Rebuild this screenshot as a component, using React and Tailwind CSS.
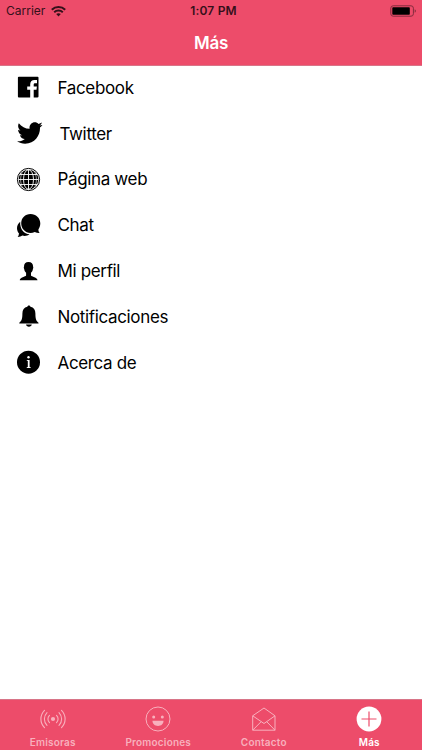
import React, { useState } from 'react';

const FacebookIcon = () => (
  <svg className="w-[25px] h-[25px]" viewBox="-0.5 -0.5 25 25">
    <path
      fill="currentColor"
      d="M2.300 1.200h18.800c.5 0 .9.4.9.9v19c0 .5-.4.9-.9.9h-3.900v-7.700h2.800l.4-3.200h-3.200V9.200c0-1 .3-1.500 1.600-1.500h1.700V4.600c-.3 0-1.300-.1-2.500-.1-2.500 0-4.300 1.500-4.300 4.400v2.200H10.700v3.200h3V22H2.300c-.5 0-.9-.4-.9-.9v-19c0-.5.4-.9.9-.9z"
    />
  </svg>
);

const TwitterIcon = () => (
  <svg className="w-[27px] h-[28px] shrink-0" viewBox="0 0.900 24 24" preserveAspectRatio="none">
    <path
      fill="currentColor"
      d="M23.643 4.937c-.835.37-1.732.62-2.675.733.962-.576 1.700-1.490 2.048-2.578-.9.534-1.897.922-2.958 1.130-.850-.904-2.060-1.470-3.400-1.470-2.572 0-4.658 2.086-4.658 4.660 0 .364.042.718.120 1.060-3.873-.195-7.304-2.050-9.602-4.868-.4.690-.630 1.490-.630 2.342 0 1.616.823 3.043 2.072 3.878-.764-.025-1.482-.234-2.110-.583v.06c0 2.257 1.605 4.140 3.737 4.568-.392.106-.803.162-1.227.162-.3 0-.593-.028-.877-.082.593 1.850 2.313 3.198 4.352 3.234-1.595 1.250-3.604 1.995-5.786 1.995-.376 0-.747-.022-1.112-.065 2.062 1.323 4.510 2.093 7.140 2.093 8.570 0 13.255-7.098 13.255-13.254 0-.2-.005-.402-.014-.602.910-.658 1.700-1.477 2.323-2.410z"
    />
  </svg>
);

const GlobeIcon = () => (
  <svg className="w-[25px] h-[25px]" viewBox="-0.5 -0.5 25 25" fill="none">
    <circle cx="12" cy="12" r="11.100" stroke="#000" strokeWidth="1" />
    <circle cx="12" cy="12" r="9.800" fill="#000" />
    <g stroke="#fff" strokeWidth="0.900">
      <path d="M12 2v20M2 12h20M3.500 7h17M3.500 17h17" />
      <ellipse cx="12" cy="12" rx="5" ry="9.800" />
    </g>
    <path d="M5.700 4.800c-2.100 4.500-2.100 9.900 0 14.400M18.300 4.800c2.100 4.500 2.100 9.900 0 14.400" stroke="#fff" strokeWidth="0.600" />
  </svg>
);

const ChatIcon = () => (
  <svg className="w-[25px] h-[25px]" viewBox="-0.5 -0.5 25 25" fill="currentColor">
    <path d="M3.700 8.200C1.500 10 .5 12.200.5 14.700c0 2.200.9 4 2 5.200-.1 1.400-.6 2.600-1.300 3.600 1.900 0 3.500-.5 4.700-1.400 2.500.7 5.100.2 7.200-1.300C7.500 20.400 3.300 15.700 3.700 8.200z" />
    <path d="M14 .4C8.700.4 4.700 4.400 4.700 9.700s4 9.700 9.300 9.700c1.500 0 2.900-.3 4.200-.9 1.500.8 3.200 1.200 5 1.100-.9-1.100-1.300-2.300-1.300-3.700 1.200-1.600 1.900-3.700 1.900-6.100C23.800 4.400 19.400.4 14 .4z" />
  </svg>
);

const ProfileIcon = () => (
  <svg className="w-[25px] h-[25px]" viewBox="-0.5 -0.5 25 25" fill="currentColor">
    <path d="M12 2.600c-3 0-4.600 1.900-4.500 4.600-.3.200-.3 1 .2 2.200.2 1.700.9 3 1.900 3.800v2.700c-.4 1.200-6.400 1.700-6.300 4.900h17.700c0-3.200-6.100-3.700-6.500-4.900v-2.700c1-.8 1.700-2.100 1.900-3.800.5-1.200.5-2 .2-2.200.1-2.700-1.600-4.600-4.600-4.600z" />
  </svg>
);

const BellIcon = () => (
  <svg className="w-[25px] h-[25px]" viewBox="-0.5 -0.5 25 25" fill="currentColor">
    <path d="M12.400 1c-.9 0-1.500.6-1.500 1.300C7.500 3 5.900 5.500 5.900 9c0 5.200-.8 7.600-3.100 9.300v.8H22v-.8c-2.300-1.700-3.100-4.100-3.100-9.300 0-3.500-1.600-6-5-6.700 0-.7-.6-1.300-1.500-1.300z" />
    <path d="M9.500 20.100h5.800c-.3 1.300-1.300 2.200-2.900 2.200s-2.600-.9-2.900-2.200z" />
  </svg>
);

const InfoIcon = () => (
  <svg className="w-[25px] h-[25px]" viewBox="-0.5 -0.5 25 25">
    <circle cx="12" cy="11.700" r="11.500" fill="#000" />
    <circle cx="12" cy="6.800" r="1.200" fill="#fff" />
    <path fill="#fff" d="M10.200 9.500h2.900v6.900l1.100.4v.6h-4v-.6l1.100-.4v-5.900l-1.100-.4z" />
  </svg>
);

const RadioIcon = () => (
  <svg className="w-[26px] h-[26px]" viewBox="0 0 26 26" fill="none" stroke="currentColor" strokeWidth="1.100" strokeLinecap="round">
    <circle cx="13" cy="13" r="2.100" fill="currentColor" stroke="none" />
    <path d="M9.500 9.300c-2.100 2-2.100 5.400 0 7.400M16.500 9.300c2.100 2 2.100 5.400 0 7.400" />
    <path d="M7 6.600c-3.500 3.600-3.500 9.200 0 12.800M19 6.600c3.500 3.600 3.500 9.200 0 12.800" />
    <path d="M4.500 4.300c-4.800 5-4.800 12.400 0 17.400M21.500 4.300c4.800 5 4.800 12.400 0 17.400" />
  </svg>
);

const SmileIcon = () => (
  <svg className="w-[26px] h-[26px]" viewBox="0 0 26 26" fill="currentColor">
    <circle cx="13" cy="13" r="12" fill="none" stroke="currentColor" />
    <circle cx="8.700" cy="11" r="1.500" />
    <circle cx="17.300" cy="11" r="1.500" />
    <path d="M7.500 14.700h11c0 3.200-2.300 5.200-5.500 5.200s-5.500-2-5.500-5.200z" />
  </svg>
);

const MailIcon = () => (
  <svg className="w-[26px] h-[26px]" viewBox="0 0 26 26" fill="none" stroke="currentColor" strokeWidth="1">
    <path d="M1.700 9.800 13 2l11 7.800v14.400H1.700z" />
    <path d="m1.700 9.800 11.300 7.700 11-7.700M1.700 24.200l8.300-8.400M24 24.200 15.800 15.800" />
  </svg>
);

const PlusIcon = () => (
  <svg className="w-[26px] h-[26px]" viewBox="0 0 26 26">
    <circle cx="13" cy="13" r="12.400" fill="#fff" />
    <path d="M13 5.500v15M5.500 13h15" stroke="#ed4c6a" strokeWidth="1.200" />
  </svg>
);

const menuItems = [
  { label: 'Facebook', icon: FacebookIcon },
  { label: 'Twitter', icon: TwitterIcon },
  { label: 'Página web', icon: GlobeIcon },
  { label: 'Chat', icon: ChatIcon },
  { label: 'Mi perfil', icon: ProfileIcon },
  { label: 'Notificaciones', icon: BellIcon },
  { label: 'Acerca de', icon: InfoIcon },
];

const tabs = [
  { label: 'Emisoras', icon: RadioIcon },
  { label: 'Promociones', icon: SmileIcon },
  { label: 'Contacto', icon: MailIcon },
  { label: 'Más', icon: PlusIcon },
];

const StatusBar = () => (
  <div className="grid grid-cols-3 items-center h-[22px] pl-1.5 pr-[5px] text-[#35101a]">
    <div className="flex items-center gap-1.5">
      <span className="text-[12px]">Carrier</span>
      <svg className="w-[15px] h-[11px]" viewBox="0 0 15 11" fill="none" stroke="currentColor" strokeWidth="2">
        <path d="M.8 3.800C4.500.1 10.500.1 14.200 3.800" />
        <path d="M3.200 6.300c2.400-2.300 6.200-2.300 8.600 0" />
        <path d="M5.200 8.100c1.300-1.200 3.300-1.200 4.600 0L7.500 10.500z" fill="currentColor" stroke="none" />
      </svg>
    </div>
    <span className="text-center text-[12px] font-semibold tracking-[0.2px] pl-1">1:07 PM</span>
    <svg className="w-[27px] h-3 justify-self-end" viewBox="0 0 27 12">
      <rect x="0.800" y="0.800" width="22.600" height="10.400" rx="2.400" fill="none" stroke="#842b3d" />
      <rect x="2.300" y="2.300" width="17.500" height="7.400" rx="0.800" fill="#000" />
      <path d="M24.700 4.200c1.600.6 1.600 3 0 3.600z" fill="#842b3d" />
    </svg>
  </div>
);

const App = () => {
  const [activeTab, setActiveTab] = useState('Más');

  return (
    <div className="h-screen bg-white flex flex-col font-['Inter',sans-serif]">
      <header className="h-[66px] shrink-0 bg-[#ed4c6a] border-b border-[#d87588]">
        <StatusBar />
        <h1 className="text-center text-[17px] leading-[42px] font-semibold tracking-[-0.2px] text-white">Más</h1>
      </header>

      {/* Menu */}
      <ul className="flex-1 -mt-px">
        {menuItems.map(({ label, icon: Icon }) => (
          <li key={label} className="flex items-center h-[45.8px] pl-4 text-black">
            <Icon />
            <span className="ml-[16.5px] pt-[1.5px] text-[17px] tracking-[-0.35px]">{label}</span>
          </li>
        ))}
      </ul>

      {/* Tab bar */}
      <nav className="h-[51px] shrink-0 grid grid-cols-4 bg-[#ed4c6a] border-t border-[#d87588]">
        {tabs.map(({ label, icon: Icon }) => (
          <button
            key={label}
            onClick={() => setActiveTab(label)}
            className={`flex flex-col items-center pt-1.5 ${activeTab === label ? 'text-white' : 'text-[#f8b0bd]'}`}
          >
            <Icon />
            <span className="mt-[3px] text-[10px] leading-[14px] font-semibold tracking-[0.2px]">{label}</span>
          </button>
        ))}
      </nav>
    </div>
  );
};

export default App;
